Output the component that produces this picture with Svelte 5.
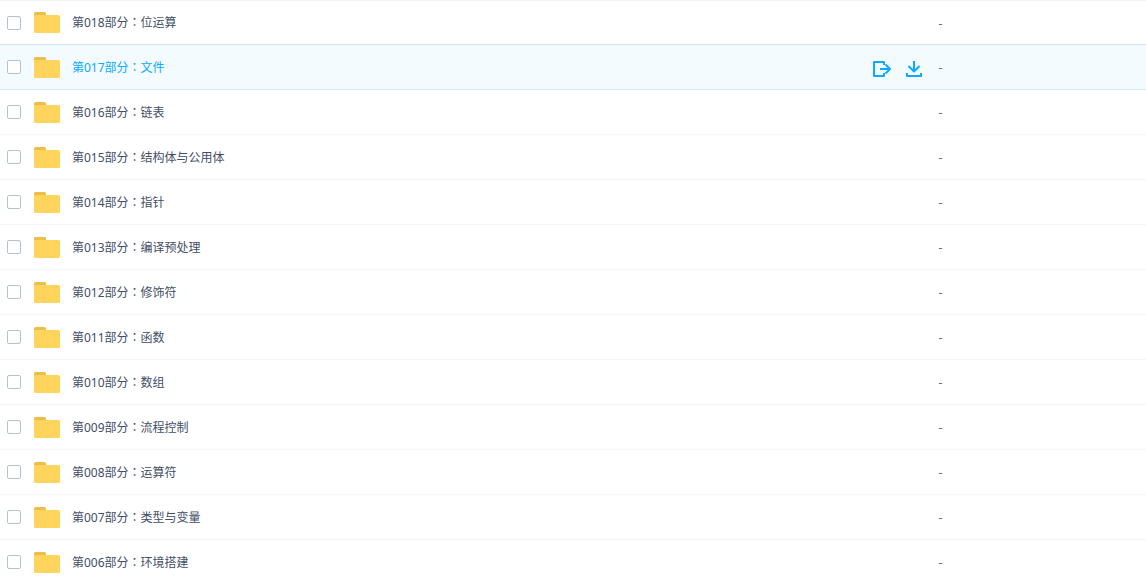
<script lang="ts">
	let files = $state([
		{ part: '018', title: '位运算', size: '-', checked: false },
		{ part: '017', title: '文件', size: '-', checked: false },
		{ part: '016', title: '链表', size: '-', checked: false },
		{ part: '015', title: '结构体与公用体', size: '-', checked: false },
		{ part: '014', title: '指针', size: '-', checked: false },
		{ part: '013', title: '编译预处理', size: '-', checked: false },
		{ part: '012', title: '修饰符', size: '-', checked: false },
		{ part: '011', title: '函数', size: '-', checked: false },
		{ part: '010', title: '数组', size: '-', checked: false },
		{ part: '009', title: '流程控制', size: '-', checked: false },
		{ part: '008', title: '运算符', size: '-', checked: false },
		{ part: '007', title: '类型与变量', size: '-', checked: false },
		{ part: '006', title: '环境搭建', size: '-', checked: false }
	]);

	let active = $state('017');
</script>

<main class="file-list">
	<table>
		<tbody>
			{#each files as file (file.part)}
				<tr class:active={file.part === active}>
					<td class="name-cell">
						<div class="name">
							<input
								type="checkbox"
								id="file-{file.part}"
								aria-labelledby="name-{file.part}"
								bind:checked={file.checked}
							/>
							<svg class="folder" viewBox="0 0 26 21" aria-hidden="true">
								<path d="M0 6V1.5Q0 0 1.5 0H10.5Q12 0 12 1.5V6Z" fill="#ecbd48" />
								<path d="M0 3H24.5Q26 3 26 4.5V19.5Q26 21 24.5 21H1.5Q0 21 0 19.5Z" fill="#ffd45c" />
							</svg>
							<a
								id="name-{file.part}"
								href="#part-{file.part}"
								onclick={() => (active = file.part)}
								>第{file.part}部分<span class="colon">：</span>{file.title}</a
							>
							{#if file.part === active}
								<div class="actions">
									<button type="button" aria-label="分享">
										<svg width="20" height="18" viewBox="0 0 20 18" aria-hidden="true">
											<path d="M12 5V2H2V16H12V13" />
											<path d="M8 9H18M13.5 4.5L18 9L13.5 13.5" />
										</svg>
									</button>
									<button type="button" aria-label="下载">
										<svg width="18" height="18" viewBox="0 0 18 18" aria-hidden="true">
											<path d="M9 1V12M3.5 6L9 11.5L14.5 6" />
											<path d="M2 13V16H16V13" />
										</svg>
									</button>
								</div>
							{/if}
						</div>
					</td>
					<td class="size">{file.size}</td>
				</tr>
			{/each}
		</tbody>
	</table>
</main>

<style>
	.file-list {
		height: 100vh;
		overflow: hidden;
		background: #fff;
		color: #424e67;
		font: 12px/18px 'Noto Sans', 'Noto Sans CJK SC', sans-serif;
	}

	table {
		width: 100%;
		table-layout: fixed;
		border-collapse: separate;
		border-spacing: 0;
	}

	td {
		box-sizing: border-box;
		height: 45px;
		padding: 0;
		border-bottom: 1px solid #f2f6fd;
	}

	tr:first-child td {
		border-top: 1px solid #f2f2f2;
	}

	/* the line above the active row belongs to the row before it */
	tr:has(+ .active) td,
	.active td {
		border-bottom-color: #cfe8fa;
	}

	.active td {
		background: #f3fbff;
	}

	.name {
		display: flex;
		align-items: center;
		padding: 0 16px 0 7px;
	}

	input {
		appearance: none;
		flex: none;
		box-sizing: border-box;
		width: 14px;
		height: 14px;
		margin: 0 13px 0 0;
		border: 1px solid #b4c1d3;
		border-radius: 2px;
		background: #fff;
	}

	input:checked {
		border-color: #09aaff;
		background: #09aaff;
	}

	.folder {
		flex: none;
		width: 26px;
		height: 21px;
		margin-right: 12px;
	}

	a {
		color: inherit;
		text-decoration: none;
		white-space: nowrap;
	}

	.active a {
		color: #09aaff;
	}

	/* centres the colon in its full-width box */
	.colon {
		font-family: 'Noto Sans CJK TC', sans-serif;
	}

	.actions {
		display: flex;
		gap: 13px;
		margin-left: auto;
		padding-top: 3px;
	}

	button {
		display: block;
		padding: 0;
		border: 0;
		background: none;
		cursor: pointer;
	}

	button svg {
		display: block;
		fill: none;
		stroke: #09aaff;
		stroke-width: 2;
		stroke-linejoin: round;
	}

	.size {
		width: 18.1%;
		padding-top: 2px;
		color: #666;
	}
</style>
